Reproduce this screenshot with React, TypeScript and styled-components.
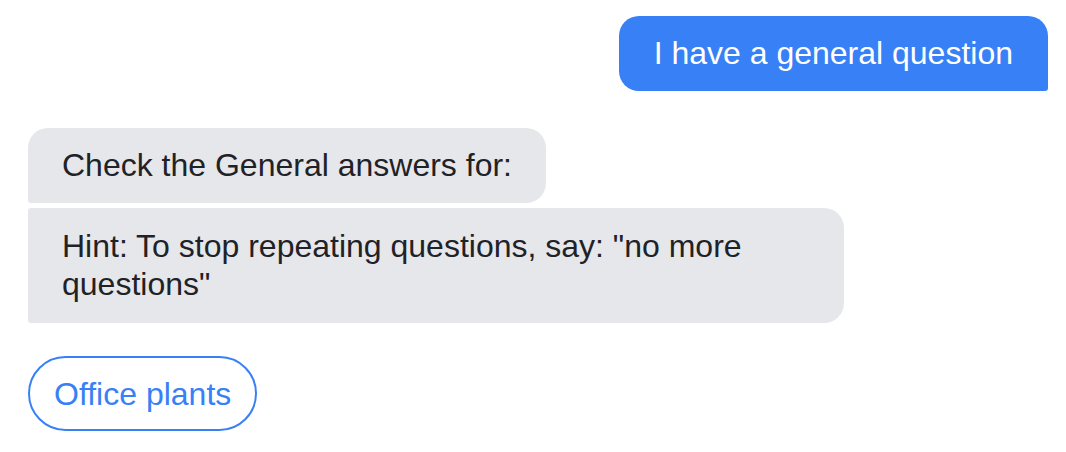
import React from "react";
import styled, { createGlobalStyle } from "styled-components";

const GlobalStyle = createGlobalStyle`
  html, body {
    margin: 0;
    padding: 0;
    background: #ffffff;
  }
  body {
    font-family: "Liberation Sans", Arial, Helvetica, sans-serif;
  }
`;

const Chat = styled.div`
  display: flex;
  flex-direction: column;
  padding: 16px 18px 0 28px;
  font-family: "Liberation Sans", Arial, Helvetica, sans-serif;
  font-size: 32px;
  line-height: 38px;
`;

const UserRow = styled.div`
  display: flex;
  justify-content: flex-end;
  margin-bottom: 37px;
`;

const BotGroup = styled.div`
  display: flex;
  flex-direction: column;
  align-items: flex-start;
  gap: 5px;
`;

const UserBubble = styled.div`
  max-width: 80%;
  box-sizing: border-box;
  background: #3880f5;
  color: #ffffff;
  padding: 18px 35px 19px 35px;
  border-radius: 20px 20px 3px 20px;
`;

type Pos = "first" | "last";

const BotBubble = styled.div<{ $pos: Pos }>`
  max-width: 80%;
  box-sizing: border-box;
  background: #e6e7eb;
  color: #1f2226;
  padding: ${(p) => (p.$pos === "first" ? "18px 34px 19px 34px" : "19px 34px 20px 34px")};
  border-radius: ${(p) =>
    p.$pos === "first" ? "20px 20px 20px 3px" : "3px 20px 20px 3px"};
`;

const Replies = styled.div`
  display: flex;
  gap: 12px;
  margin-top: 33px;
`;

const ReplyButton = styled.button`
  box-sizing: border-box;
  height: 75px;
  display: flex;
  align-items: center;
  padding: 0 24px;
  background: #ffffff;
  border: 2px solid #3880f5;
  border-radius: 38px;
  color: #3880f5;
  font-family: "Liberation Sans", Arial, Helvetica, sans-serif;
  font-size: 32px;
  line-height: 38px;
  cursor: pointer;
`;

export default function App() {
  return (
    <>
      <GlobalStyle />
      <Chat>
        <UserRow>
          <UserBubble>I have a general question</UserBubble>
        </UserRow>
        <BotGroup>
          <BotBubble $pos="first">Check the General answers for:</BotBubble>
          <BotBubble $pos="last">
            Hint: To stop repeating questions, say: "no more questions"
          </BotBubble>
        </BotGroup>
        <Replies>
          <ReplyButton>Office plants</ReplyButton>
        </Replies>
      </Chat>
    </>
  );
}
